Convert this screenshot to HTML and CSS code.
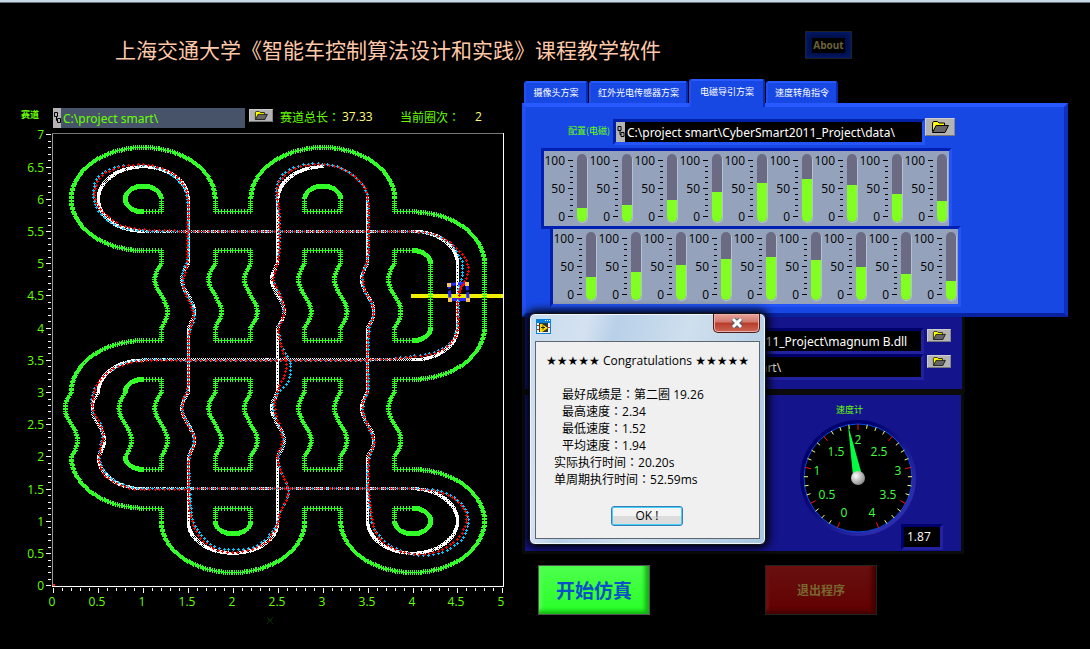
FILE: index.html
```html
<!DOCTYPE html>
<html lang="zh-CN">
<head>
<meta charset="utf-8">
<title>CyberSmart 2011</title>
<link rel="stylesheet" href="styles.css">
</head>
<body>
<svg class="sprite" aria-hidden="true">
  <symbol id="folder" viewBox="0 0 18 12">
    <path d="M1.500 10.500V2l1-1.500h4L8 2h5.500v3" fill="#ffff00" stroke="#000"/>
    <path d="M1.500 11.500L5 4.500h12.500L14 11.500z" fill="#666" stroke="#000"/>
  </symbol>
  <symbol id="link" viewBox="0 0 8 20">
    <path d="M1.500 4.500h3v4h-3zM3.500 8.500v4h1M4.500 10.500h3v4h-3z" fill="none" stroke="#000"/>
  </symbol>
</svg>
<div class="strip"></div>
<header class="top">
  <h1 class="title">上海交通大学《智能车控制算法设计和实践》课程教学软件</h1>
  <button class="about" type="button"><span>About</span></button>
</header>
<main class="main">
  <section class="left">
    <div class="trackbar">
      <label class="tiny track-label" for="track">赛道</label>
      <div class="field field-slate"><svg class="link"><use href="#link"/></svg><input id="track" value="C:\project smart\"></div>
      <button class="browse" type="button" aria-label="浏览赛道"><svg><use href="#folder"/></svg></button>
      <span class="stat stat-length">赛道总长<span class="colon" lang="zh-TW">：</span></span><output class="num num-length">37.33</output>
      <span class="stat stat-lap">当前圈次<span class="colon" lang="zh-TW">：</span></span><output class="num num-lap">2</output>
    </div>
    <svg class="plot" id="plot" viewBox="0 128 520 510" role="img" aria-label="赛道"></svg>
  </section>
  <section class="right">
    <nav class="tabs">
      <button class="tab tab-camera" type="button">摄像头方案</button>
      <button class="tab tab-infrared" type="button">红外光电传感器方案</button>
      <button class="tab tab-magnet active" type="button">电磁导引方案</button>
      <button class="tab tab-speed" type="button">速度转角指令</button>
    </nav>
    <div class="tabpanel">
      <div class="config">
        <label class="tiny" for="config">配置(电磁)</label>
        <div class="field field-black sunken"><svg class="link"><use href="#link"/></svg><input id="config" value="C:\project smart\CyberSmart2011_Project\data\"></div>
        <button class="browse browse-large" type="button" aria-label="浏览配置"><svg><use href="#folder"/></svg></button>
      </div>
      <div class="meters" data-values="15,21,30,44,60,67,57,40,28"></div>
      <div class="meters meters-second" data-values="32,40,53,64,67,62,49,37,24"></div>
    </div>
    <div class="files">
      <div class="file-row">
        <div class="field field-black sunken"><input class="dll" aria-label="DLL" value="C:\project smart\CyberSmart2011_Project\magnum B.dll"></div>
        <button class="browse" type="button" aria-label="浏览 DLL"><svg><use href="#folder"/></svg></button>
      </div>
      <div class="file-row">
        <div class="field field-black sunken"><input class="dir" aria-label="目录" value="C:\project smart\"></div>
        <button class="browse" type="button" aria-label="浏览目录"><svg><use href="#folder"/></svg></button>
      </div>
    </div>
    <div class="speed">
      <div class="speed-box">
        <h2 class="tiny speed-title">速度计</h2>
        <svg class="gauge" id="gauge" viewBox="0 0 120 120" role="img" aria-label="速度计"></svg>
        <output class="readout sunken">1.87</output>
      </div>
    </div>
    <div class="actions">
      <button class="start" type="button">开始仿真</button>
      <button class="exit" type="button">退出程序</button>
    </div>
  </section>
</main>
<div class="dialog" role="dialog" aria-label="Congratulations">
  <div class="dialog-bar">
    <svg class="app" viewBox="0 0 15 15"><path d="M0 0h15v15H0z" fill="#0a80d8"/><path d="M1 4h13v10H1z" fill="#f4f4f4"/><path d="M9 1.500h1M11 1.500h1M13 1.500h1" stroke="#fff"/><path d="M3 4h9v9H3z" fill="#333"/><path d="M4 5h2l6 4-6 4H4z" fill="#ffe100"/><path d="M5 8.500h4M7 6.500v4" stroke="#222"/><path d="M1 6.500h2M1 10.500h2" stroke="#e02020"/><path d="M12 8.500h2" stroke="#e02020"/></svg>
    <button class="close" type="button" aria-label="Close"><svg viewBox="0 0 12 10"><path d="M2 1l8 8M10 1L2 9" stroke="#555c6b" stroke-width="5"/><path d="M2 1l8 8M10 1L2 9" stroke="#fff" stroke-width="3"/></svg></button>
  </div>
  <div class="client">
    <p class="congrats"><span class="stars">★★★★★</span> Congratulations <span class="stars">★★★★★</span></p>
    <p class="line inset">最好成绩是<span class="colon" lang="zh-TW">：</span>第二圈 19.26</p>
    <p class="line inset">最高速度<span class="colon" lang="zh-TW">：</span>2.34</p>
    <p class="line inset">最低速度<span class="colon" lang="zh-TW">：</span>1.52</p>
    <p class="line inset">平均速度<span class="colon" lang="zh-TW">：</span>1.94</p>
    <p class="line">实际执行时间<span class="colon" lang="zh-TW">：</span>20.20s</p>
    <p class="line">单周期执行时间<span class="colon" lang="zh-TW">：</span>52.59ms</p>
    <button class="ok" type="button">OK !</button>
  </div>
</div>
<script src="app.js"></script>
</body>
</html>
```
FILE: styles.css
```css
* { box-sizing: border-box; }
body {
  margin: 0;
  min-height: 100vh;
  position: relative;
  background: #000;
  color: #fff;
  font: 12px/17px "Open Sans", "Noto Sans CJK SC", sans-serif;
}
button, input, output { font: inherit; }
button { padding: 0; border: 0; }
.sprite { display: none; }
.strip { height: 3px; background: #c9d8e8; border-bottom: 1px solid #6b747c; }
.top {
  height: 76px;
  padding: 28px 238px 0 115px;
  display: flex;
  justify-content: space-between;
  align-items: flex-start;
}
.title {
  margin: 2px 0 0;
  font: 400 21px/32px "Noto Sans CJK SC", sans-serif;
  color: #ffc8a8;
  white-space: nowrap;
}
.about {
  width: 47px;
  height: 28px;
  background: #00104c;
  border: 1px solid #222;
  box-shadow: inset 0 0 5px 1px #001e78;
}
.about span {
  display: block;
  margin: 0 6px;
  background: #000;
  color: #6c6238;
  font: bold 10px/15px "Open Sans", sans-serif;
}
.colon { font-family: "Noto Sans CJK TC", sans-serif; line-height: 1; }
.main { display: grid; grid-template-columns: minmax(0, 520fr) minmax(0, 570fr); }
.left { padding-top: 26px; }
.trackbar { height: 23px; display: flex; align-items: flex-start; padding-left: 21px; }
.tiny { font: bold 9px/16px "Noto Sans CJK SC", sans-serif; color: #66ff00; white-space: nowrap; }
.track-label { width: 32px; padding-top: 2px; }
.field { display: flex; min-width: 0; height: 20px; }
.field input {
  flex: 1;
  min-width: 0;
  width: 100%;
  padding: 0 3px;
  border: 0;
  background: transparent;
  color: #fff;
  font-family: "Noto Sans", sans-serif;
}
.link { flex: none; width: 8px; height: 100%; background: #b4b4b4; }
.field-slate { width: 192px; margin-top: 3px; background: #465369; }
.field .link + input { padding-left: 2px; }
.field-slate input { color: #66ff00; }
.browse {
  width: 24px;
  height: 13px;
  margin: 4px 7px 0 4px;
  background: #b4b4b4;
  border: 1px solid;
  border-color: #ccc #888 #777 #ccc;
  display: flex;
  align-items: center;
  justify-content: center;
}
.browse svg { width: 14px; height: 9px; }
.browse-large { width: 30px; height: 18px; margin: 0; }
.browse-large svg { width: 18px; height: 12px; }
.stat { color: #66ff00; line-height: 20px; padding-top: 3px; white-space: nowrap; }
.stat-length { width: 62px; }
.num { color: #ffff80; line-height: 20px; padding-top: 2px; }
.num-length { width: 58px; }
.stat-lap { width: 75px; }
.plot { display: block; width: 100%; overflow: visible; }
.plot text { font-size: 12px; fill: #66ff00; }
.right { padding: 0 22px 0 2px; }
.tabs { height: 24px; display: flex; align-items: flex-end; gap: 1px; padding-left: 2px; }
.tab {
  height: 22px;
  background: #1848e4;
  color: #fff;
  font: 9px/20px "Noto Sans CJK SC", sans-serif;
  border-top: 2px solid #2858ff;
  border-left: 2px solid #2050f4;
  border-right: 2px solid #0c2cb0;
  border-radius: 3px 3px 0 0;
  white-space: nowrap;
}
.tab-camera { width: 64px; }
.tab-infrared { width: 99px; }
.tab-magnet { width: 76px; }
.tab-speed { width: 72px; }
.tab.active { height: 28px; margin-bottom: -4px; padding-bottom: 4px; z-index: 1; }
.tabpanel {
  background: #1848e4;
  border: 4px solid;
  border-color: #2858ff #0c30c0 #0822a0 #2050f4;
  height: 214px;
  padding: 11px 0 0 15px;
}
.config { display: flex; height: 30px; padding-left: 27px; }
.config .tiny { width: 45px; padding-top: 5px; font-weight: normal; }
.sunken { border: 3px solid; border-color: #0020a8 #2454f8 #2454f8 #0020a8; }
.field-black { background: #000; height: 26px; }
.config .field { width: 312px; margin-top: 1px; }
.config .link { width: 9px; }
.meters {
  width: 411px;
  display: flex;
  background: #94a3bb;
  border: 3px solid;
  border-color: #0020b4 #2454f8 #0020b4 #0020b4;
}
.meters-second { margin: -3px 0 0 9px; border-bottom-color: #2454f8; }
.meter { flex: 1; min-width: 0; display: block; }
.meter text { font-size: 12px; fill: #000; text-anchor: end; }
.files {
  margin-right: 103px;
  height: 75px;
  padding: 11px 9px 0 12px;
  background: #14148c;
  border: 3px solid #0b0b0b;
  border-top: 0;
}
.file-row { display: flex; justify-content: flex-end; height: 26px; }
.file-row .field { flex: 1; }
.file-row .browse { margin: 1px 2px 0 3px; }
.files .sunken, .speed .sunken { border-color: #00006c #2222a0 #2222a0 #00006c; }
.field .dll { padding-left: 50px; padding-right: 0; }
.field .dir { padding-left: 146px; color: #ddd; }
.speed {
  margin-right: 104px;
  height: 162px;
  background: #14148c;
  border: 3px solid #0b0b0b;
  display: flex;
  justify-content: flex-end;
}
.speed-box { width: 170px; padding-top: 7px; display: flex; flex-wrap: wrap; align-content: flex-start; position: relative; }
.speed-title { margin: 0 0 0 45px; width: 110px; font-weight: normal; }
.gauge { width: 120px; height: 120px; margin-left: 7px; }
.gauge text { font-size: 12px; fill: #40ff40; text-anchor: middle; }
.readout { position: absolute; right: 18px; bottom: 1px; width: 42px; height: 26px; line-height: 20px; padding-left: 3px; background: #000; }
.actions { display: flex; justify-content: space-between; padding: 11px 191px 0 16px; }
.start, .exit { width: 112px; height: 50px; }
.start {
  background: linear-gradient(#4cff4c, #28ff28);
  border: 1px solid #555;
  box-shadow: inset -4px -3px 4px #12b012, inset 3px 2px 3px #50ff50;
  color: #0850c8;
  font: bold 19px/46px "Noto Sans CJK SC", sans-serif;
}
.exit {
  background: linear-gradient(#681010, #620000);
  border: 1px solid #222;
  box-shadow: inset -4px -3px 4px #420000, inset 3px 2px 3px #701010;
  color: #786830;
  font: bold 12px/46px "Noto Sans CJK SC", sans-serif;
}
.dialog {
  position: absolute;
  left: 529px;
  top: 313px;
  width: 237px;
  padding: 0 5px 5px;
  background: linear-gradient(105deg, #c8dcee, #d4e2f0 20%, #b8d0e8 30%, #cfdfee 55%, #a8c6e0);
  border: 1px solid #111;
  border-radius: 6px;
  box-shadow: inset 0 0 0 1px #eef6ff, 0 0 8px 3px #000;
  color: #000;
  z-index: 2;
}
.dialog-bar { height: 27px; display: flex; justify-content: space-between; }
.app { width: 15px; height: 15px; margin: 5px 0 0 1px; }
.close {
  width: 47px;
  height: 19px;
  background: linear-gradient(#e8a49a, #d0776c 45%, #b83a28 50%, #cc6858);
  border: 1px solid #501c1c;
  border-top: 0;
  border-radius: 0 0 5px 5px;
  box-shadow: inset 0 0 0 1px #e8b0a8;
}
.close svg { width: 12px; height: 10px; display: block; margin: auto; fill: none; }
.client { background: #f0f0f0; border: 1px solid #5c6670; padding: 10px 10px 12px; height: 198px; }
.client p { margin: 0; height: 17px; white-space: nowrap; }
.client .congrats { margin-bottom: 17px; }
.stars { font-family: "DejaVu Sans", sans-serif; }
.client .line { padding-left: 8px; }
.client .inset { padding-left: 16px; }
.ok {
  display: block;
  width: 72px;
  height: 20px;
  margin: 18px auto 0 65px;
  background: linear-gradient(#f4f4f4 50%, #dcdcdc 50%);
  border: 1px solid #3c7fb1;
  border-radius: 3px;
  box-shadow: inset 0 0 0 1px #40d0ff;
  line-height: 18px;
}
```
FILE: app.js
```js
const X = u => 53.3 + 89.8 * u;
const Y = v => 585.3 - 64.4 * v;

// Pen that collects sample points in track units.
function pen(step) {
  const pts = [];
  let cx = 0, cy = 0;
  const api = {
    pts,
    at(x, y) { cx = x; cy = y; pts.push([x, y]); return api; },
    to(x, y) {
      const n = Math.max(1, Math.round(Math.hypot(x - cx, y - cy) / step));
      for (let i = 1; i <= n; i++) pts.push([cx + (x - cx) * i / n, cy + (y - cy) * i / n]);
      cx = x; cy = y;
      return api;
    },
    arc(ox, oy, r, a, b) {
      const n = Math.round(Math.abs(b - a) * 2 / 3);
      for (let i = 0; i <= n; i++) {
        const t = (a + (b - a) * i / n) * Math.PI / 180;
        pts.push([ox + r * Math.cos(t), oy + r * Math.sin(t)]);
      }
      [cx, cy] = pts[pts.length - 1];
      return api;
    },
    wave(y) {
      const top = Math.max(cy, y), start = cy, n = 40;
      for (let i = 1; i <= n; i++) {
        const v = start + (y - start) * i / n;
        pts.push([cx - 0.07 * Math.sin(2 * Math.PI * (top - v)), v]);
      }
      cy = y;
      return api;
    }
  };
  return api;
}

const marks = {
  big: (x, y) => `M${x - 2} ${y}h5v1h-5zM${x} ${y - 2}h1v5h-1z`,
  plus: (x, y) => `M${x - 1} ${y}h3v1h-3zM${x} ${y - 1}h1v3h-1z`,
  cross: (x, y) => `M${x - 1} ${y - 1}h1v1h-1zM${x + 1} ${y - 1}h1v1h-1zM${x} ${y}h1v1h-1zM${x - 1} ${y + 1}h1v1h-1zM${x + 1} ${y + 1}h1v1h-1z`
};
function stamp(points, kind, color) {
  const seen = new Set();
  let d = '';
  for (const [px, py] of points) {
    const x = Math.round(px), y = Math.round(py), k = x + ',' + y;
    if (!seen.has(k)) { seen.add(k); d += marks[kind](x, y); }
  }
  return `<path fill="${color}" shape-rendering="crispEdges" d="${d}"/>`;
}

const S = 1 / 30;
const borders = [];
const P = () => { const p = pen(S); borders.push(p.pts); return p; };
P().at(1.2, 5.2).to(1, 5.2).arc(1, 6, 0.8, 270, 0).to(1.8, 5.8).to(2.2, 5.8).to(2.2, 6)
  .arc(3, 6, 0.8, 180, 0).to(3.8, 5.8).to(4, 5.8).arc(4, 5, 0.8, 90, 0).to(4.8, 4)
  .arc(4, 4, 0.8, 0, -90).to(3.8, 3.2).to(3.8, 3).wave(2).to(3.8, 1.8).to(4, 1.8)
  .arc(4, 1, 0.8, 90, -180).to(3.2, 1.2).to(2.8, 1.2).to(2.8, 1)
  .arc(2, 1, 0.8, 0, -180).to(1.2, 1.2).to(1, 1.2).arc(1, 2, 0.8, 270, 180).wave(3)
  .arc(1, 3, 0.8, 180, 90).to(1.2, 3.8).to(1.2, 4).wave(5).to(1.2, 5.2);
P().at(1.2, 5.8).to(1.2, 6).arc(1, 6, 0.2, 0, 270).to(1.2, 5.8);
P().at(3.2, 5.8).to(3.2, 6).arc(3, 6, 0.2, 0, 180).to(2.8, 5.8).to(3.2, 5.8);
for (const x of [1.8, 2.8]) for (const y of [5.2, 3.2]) {
  P().at(x, y).to(x, y - 0.2).wave(y - 1.2).to(x, y - 1.4).to(x + 0.4, y - 1.4)
    .to(x + 0.4, y - 1.2).wave(y - 0.2).to(x + 0.4, y).to(x, y);
}
P().at(4, 5.2).to(3.8, 5.2).to(3.8, 5).wave(4).to(3.8, 3.8).to(4, 3.8)
  .arc(4, 4, 0.2, -90, 0).to(4.2, 5).arc(4, 5, 0.2, 0, 90);
P().at(1, 3.2).to(1.2, 3.2).to(1.2, 3).wave(2).to(1.2, 1.8).to(1, 1.8)
  .arc(1, 2, 0.2, 270, 180).wave(3).arc(1, 3, 0.2, 180, 90);
P().at(1.8, 1).to(1.8, 1.2).to(2.2, 1.2).to(2.2, 1).arc(2, 1, 0.2, 0, -180);
P().at(3.8, 1).to(3.8, 1.2).to(4, 1.2).arc(4, 1, 0.2, 90, -180);

const center = pen(0.022).at(4.5, 4).to(4.5, 5).arc(4, 5, 0.5, 0, 90).to(1, 5.5).arc(1, 6, 0.5, 270, 0)
  .to(1.5, 5).wave(4).to(1.5, 3).wave(2).to(1.5, 1).arc(2, 1, 0.5, 180, 360)
  .to(2.5, 2).wave(3).to(2.5, 4).wave(5).to(2.5, 6).arc(3, 6, 0.5, 180, 90)
  .at(3.5, 6).to(3.5, 5).wave(4).to(3.5, 3).wave(2).to(3.5, 1).arc(4, 1, 0.5, 180, 450)
  .to(1, 1.5).arc(1, 2, 0.5, 270, 180).wave(3).arc(1, 3, 0.5, 180, 90).to(4, 3.5).arc(4, 4, 0.5, -90, 0).pts;

// Logged trajectories: each tile has its origin, points are in thirds of a pixel.
const TL = [20, 125], TR = [260, 125], BL = [20, 365], BR = [260, 365];
const red = [
  [TR, 597,510, 600,490, 615,465, 623,435, 615,400, 590,370, 560,345, 520,327, 470,319, 400,317, 0,317],
  [TL, 500,318, 440,315, 370,312, 300,298, 245,258, 222,210, 240,155, 290,128, 350,118, 390,120, 440,135, 480,165, 500,205, 505,250, 500,320, 500,400, 497,430, 488,470, 493,500, 510,535, 520,570, 510,605, 505,640, 503,700],
  [BL, 503,0, 503,60, 500,80, 490,100, 487,140, 500,175, 520,210, 522,235, 510,265, 503,300, 505,400, 512,460, 535,510, 580,550, 640,562, 700,550, 745,525],
  [BR, 30,515, 50,480, 60,440, 80,400, 82,370, 70,335, 55,300, 52,270, 66,225, 60,190, 45,140, 43,110, 55,65, 72,30, 78,0],
  [TR, 75,700, 62,660, 55,620, 57,600, 70,570, 68,530, 50,490, 38,465, 42,440, 52,410, 56,380, 56,250, 50,215, 55,175, 85,140, 130,122, 190,118, 245,130, 290,160, 318,200, 323,260, 322,400, 308,445, 312,490, 335,535, 340,565, 328,600, 322,640, 320,700],
  [BR, 320,0, 322,70, 318,90, 308,110, 306,140, 320,175, 338,215, 340,240, 325,270, 323,330, 327,400, 335,460, 350,510, 390,545, 440,562, 490,567, 550,550, 600,510, 617,470, 610,430, 575,395, 530,378, 460,370, 0,370],
  [BL, 400,371, 350,372, 290,355, 250,325, 235,285, 240,255, 248,215, 240,180, 220,140, 217,110, 225,70, 250,30, 290,5],
  [TL, 310,718, 370,706, 500,704],
  [TR, 0,704, 360,703, 450,695, 520,685, 570,655, 592,610, 590,540, 596,510]
];
const blue = [
  [TR, 592,510, 597,480, 606,450, 606,415, 593,385, 570,355, 530,332, 470,320, 400,319, 0,319],
  [TL, 500,318, 440,317, 370,316, 295,304, 240,265, 219,210, 232,158, 285,125, 350,120, 390,122, 437,138, 476,168, 497,205, 503,250, 503,320, 503,400, 490,430, 486,470, 495,502, 515,535, 523,570, 512,605, 504,640, 504,700],
  [BL, 504,0, 504,60, 500,80, 488,105, 489,145, 503,175, 518,205, 519,235, 508,265, 505,300, 510,400, 516,460, 540,505, 580,542, 640,553, 700,545, 745,515],
  [BR, 25,510, 48,480, 60,440, 80,400, 82,370, 70,335, 55,300, 55,270, 68,225, 58,185, 40,140, 40,110, 55,80, 80,55, 92,10],
  [TR, 92,730, 88,705, 65,665, 55,620, 55,600, 68,570, 65,530, 50,490, 40,465, 42,440, 53,410, 55,380, 58,290, 48,215, 52,172, 80,137, 130,118, 190,116, 245,130, 290,160, 318,200, 323,260, 322,400, 306,445, 310,490, 332,535, 339,565, 328,600, 324,640, 322,700],
  [BR, 322,0, 323,70, 318,90, 310,110, 308,140, 320,175, 336,215, 338,240, 328,270, 321,330, 325,400, 332,460, 347,500, 390,540, 440,563, 500,570, 555,557, 610,515, 623,470, 615,430, 580,395, 530,376, 460,370, 0,370],
  [BL, 400,369, 350,368, 290,350, 255,320, 238,285, 238,255, 245,215, 240,175, 220,145, 214,110, 222,70, 250,30, 290,5],
  [TL, 310,714, 370,703, 500,704],
  [TR, 0,706, 360,703, 450,693, 520,681, 570,652, 590,610, 593,540, 592,510]
];
function trace(tiles, gap, phase) {
  const p = [];
  for (const [o, ...v] of tiles) for (let i = 0; i < v.length; i += 2) p.push([o[0] + v[i] / 3, o[1] + v[i + 1] / 3]);
  const out = [];
  let left = phase, last = p[0];
  for (let i = 0; i < p.length - 1; i++) {
    const a = p[i], b = p[i + 1];
    const len = Math.hypot(b[0] - a[0], b[1] - a[1]);
    const e = p[i - 1] || a, f = p[i + 2] || b;
    const limit = q => { const m = Math.hypot(...q); return m > len ? q.map(c => c * len / m) : q; };
    const ta = limit([(b[0] - e[0]) / 2, (b[1] - e[1]) / 2]), tb = limit([(f[0] - a[0]) / 2, (f[1] - a[1]) / 2]);
    const n = Math.ceil(len * 2);
    for (let j = 1; j <= n; j++) {
      const t = j / n, t2 = t * t, t3 = t2 * t;
      const q = [0, 1].map(k => (2 * t3 - 3 * t2 + 1) * a[k] + (t3 - 2 * t2 + t) * ta[k] + (3 * t2 - 2 * t3) * b[k] + (t3 - t2) * tb[k]);
      left -= Math.hypot(q[0] - last[0], (q[1] - last[1]) * 1.4);
      last = q;
      if (left <= 0) { out.push(q); left += gap; }
    }
  }
  return out;
}

const px = list => list.map(([u, v]) => [X(u) - 0.4, Y(v) - 0.4]);
let s = '<g shape-rendering="crispEdges"><path d="M52.500 134V585.500" stroke="#999"/><path d="M52 133.500H504" stroke="#777"/><path d="M503.500 133V586M52 586.500H504" stroke="#fff"/></g>';
let ticks = '', labels = '';
for (let i = 0; i <= 70; i++) {
  const y = Math.round(Y(i / 10)), major = i % 5 === 0;
  ticks += `M${major ? 46 : 48} ${y + 0.5}H51`;
  if (major) labels += `<text x="44" y="${y + 5}" text-anchor="end">${i / 10}</text>`;
}
for (let i = 0; i <= 50; i++) {
  const x = Math.round(X(i / 10)), major = i % 5 === 0;
  ticks += `M${x + 0.5} 588V${major ? 593 : 591}`;
  if (major) labels += `<text x="${x - 1}" y="606" text-anchor="middle">${i / 10}</text>`;
}
s += `<path d="${ticks}" stroke="#fff" shape-rendering="crispEdges"/>${labels}`;
s += stamp(px(center), 'cross', '#fff');
s += stamp(trace(blue, 5, 2.5), 'plus', '#00c8ff') + stamp(trace(red, 5, 0), 'plus', '#ff0000');
s += '<path d="M411 294h92v4h-92z" fill="#f0f000"/>';
s += '<path d="M449 284.500l18-1 1 16h-18z" fill="none" stroke="#2828ff" stroke-width="3" stroke-dasharray="7 2"/>';
s += stamp(borders.flatMap(px), 'big', '#33ff28');
s += stamp(trace([red[0].slice(0, 7)], 4, 0), 'plus', '#ff0000');
s += '<path d="M447 283h4v4h-4zM465 282h4v4h-4zM448 298h4v4h-4zM466 298h4v4h-4z" fill="#ffc850"/>';
s += '<path d="M53 584h2v2h-2z" fill="#ff2020"/><path d="M267 617l6 7M273 617l-6 7M268 620h4" stroke="#083008"/>';
document.getElementById('plot').innerHTML = s;

for (const box of document.querySelectorAll('.meters')) {
  box.innerHTML = box.dataset.values.split(',').map(v => {
    let d = '';
    for (let i = 0; i <= 10; i++) d += `M${i % 5 ? 26 : 24} ${Math.round(65 - i * 5.6) + 0.5}H29`;
    const y = Math.round(65.5 - v * 0.56);
    return `<svg class="meter" viewBox="0 0 45 75" role="img" aria-label="${v}"><text x="21" y="14">100</text><text x="21" y="42">50</text><text x="21" y="70">0</text><path d="${d}" stroke="#000" shape-rendering="crispEdges"/><rect x="33" y="4" width="11" height="68" rx="5" fill="#b4c0d4"/><rect x="33" y="3" width="10" height="68" rx="5" fill="#6b6b84"/><path d="M33 ${y}h10v${66 - y}a5 5 0 0 1 -10 0z" fill="#80ff20"/></svg>`;
  }).join('');
}

let g = '<defs><radialGradient id="hub" cx=".35" cy=".35" r=".7"><stop offset="0" stop-color="#fff"/><stop offset="1" stop-color="#888"/></radialGradient><linearGradient id="rim" x2="1" y2="1"><stop offset=".3" stop-color="#00006c"/><stop offset=".8" stop-color="#2c2cac"/></linearGradient></defs><circle cx="60" cy="60" r="58" fill="url(#rim)"/><circle cx="60" cy="60" r="54" fill="#000" stroke="#0848e8"/>';
for (let i = 0; i <= 32; i++) {
  const a = (-157.5 + i * 315 / 32) * Math.PI / 180, m = i % 4 === 0, r = m ? 48 : 50;
  g += `<path d="M${60 + 54 * Math.sin(a)} ${60 - 54 * Math.cos(a)}L${60 + r * Math.sin(a)} ${60 - r * Math.cos(a)}" stroke="${m ? '#ff1010' : '#ffff80'}"/>`;
}
g += '<path d="M50 7l14 50-9 1z" fill="#00ff40"/>';
[[46, 99], [29, 81], [19, 57], [38, 38], [60, 26], [81, 38], [100, 57], [90, 81], [74, 99]].forEach(([x, y], i) => {
  g += `<text x="${x}" y="${y}">${i / 2}</text>`;
});
g += '<circle cx="60" cy="60" r="7" fill="url(#hub)"/>';
document.getElementById('gauge').innerHTML = g;
```
